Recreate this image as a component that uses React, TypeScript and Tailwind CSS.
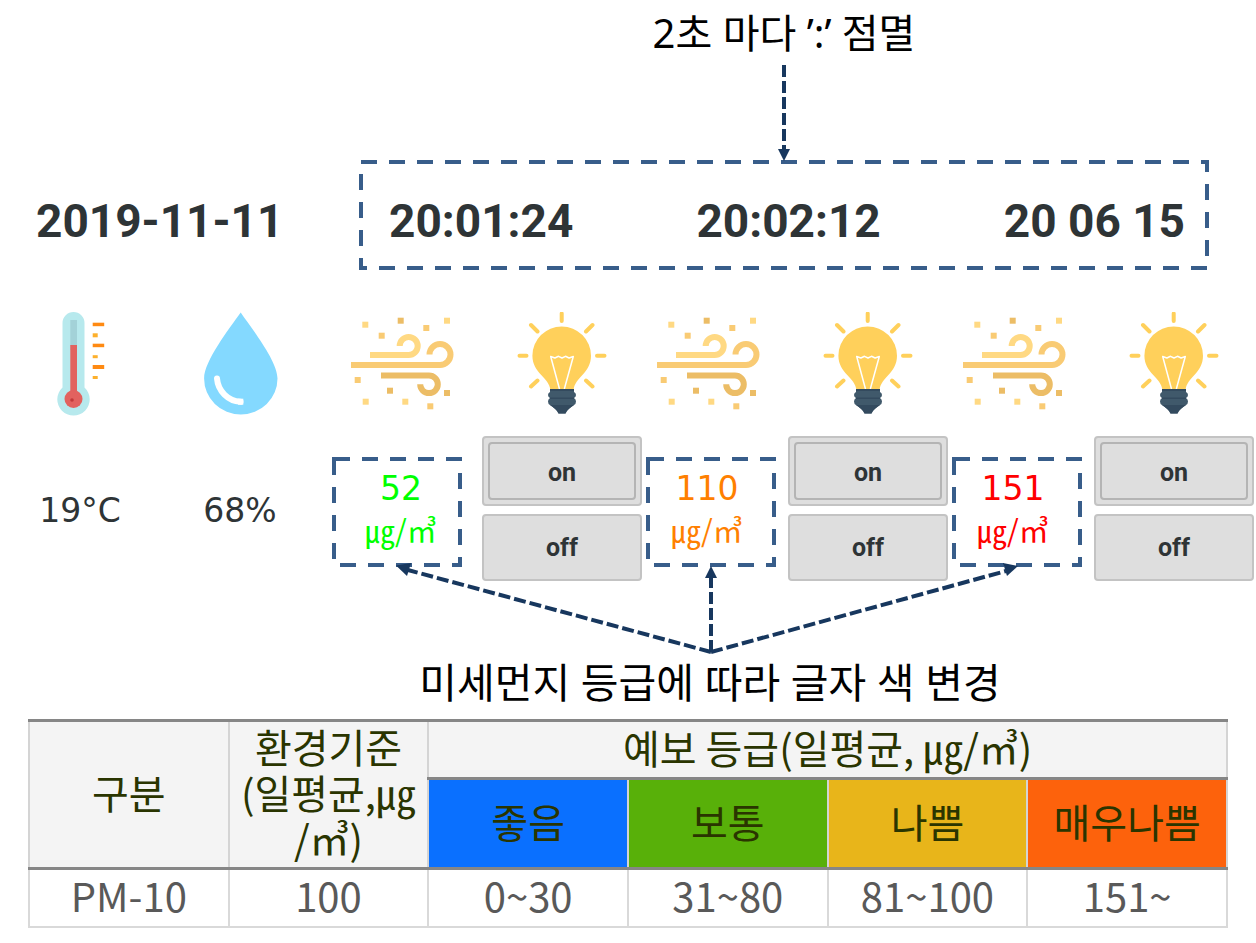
import React from "react";

const KR = "font-['Noto_Sans_CJK_KR','Noto_Sans',sans-serif]";
const NOTE = "font-['Noto_Sans','Noto_Sans_CJK_KR',sans-serif]";

function DashedFrame() {
  return (
    <svg className="absolute top-0.5 left-0.5 h-[calc(100%-4px)] w-[calc(100%-4px)] overflow-visible" aria-hidden="true">
      <rect width="100%" height="100%" fill="none" stroke="#385d8a" strokeWidth="4" strokeDasharray="16 12" />
    </svg>
  );
}

function Thermometer() {
  return (
    <svg width="50" height="104" viewBox="-2 0 50 104" aria-hidden="true">
      <path d="M5.5 11a11 11 0 0 1 22 0v64.500a16.200 16.200 0 1 1-22 0z" fill="#b7e9ed" />
      <rect x="13.300" y="8" width="6.700" height="30" fill="#a3d2d8" />
      <rect x="13.300" y="33" width="6.700" height="50" fill="#e2625f" />
      <circle cx="16.500" cy="87" r="9" fill="#e2625f" />
      <circle cx="15" cy="88" r="1.800" fill="#c23a3a" />
      <g fill="#ff8a12">
        <rect x="35.700" y="10.700" width="11.500" height="3.500" />
        <rect x="35.700" y="31.700" width="11.500" height="3.500" />
        <rect x="35.700" y="53" width="11.500" height="4" />
      </g>
      <g fill="#fdb02c">
        <rect x="35.700" y="21.300" width="5" height="4" />
        <rect x="35.700" y="43.200" width="5" height="3" />
        <rect x="35.700" y="64" width="5" height="3" />
      </g>
    </svg>
  );
}

function Drop() {
  return (
    <svg width="76" height="104" viewBox="-2 0 76 104" aria-hidden="true">
      <path d="M36.700 .5C48 17 73.500 49 73.500 66.500a36.700 36 0 0 1-73.400 0C.1 49 25 17 36.700 .5z" fill="#84d9ff" />
      <path d="M13 66.500C14 79 24 89 36.500 89.800" fill="none" stroke="#fff" strokeWidth="6" strokeLinecap="round" />
      <path d="M34 86.700h5.300v6H34z" fill="#fff" />
    </svg>
  );
}

const particles: [number, number, string][] = [
  [14.3, 7.7, "#ffd983"],
  [49.7, 3.7, "#ecbd66"],
  [96, 3.7, "#ffd983"],
  [75.3, 11, "#f9cb74"],
  [30.7, 18.7, "#f9cb74"],
  [6.7, 63, "#f9cb74"],
  [39, 73.7, "#ecbd66"],
  [14.7, 84.7, "#ffd983"],
  [54.3, 84.7, "#ffd983"],
  [79.3, 89.3, "#f9cb74"],
  [96, 76, "#ecbd66"],
];

function Wind() {
  return (
    <svg width="106" height="104" viewBox="-3 -5 106 104" aria-hidden="true">
      {particles.map(([x, y, fill]) => (
        <rect key={`${x}-${y}`} x={x - 3} y={y - 3} width="6" height="6" fill={fill} />
      ))}
      <g fill="none" strokeWidth="6">
        <path d="M19 38H57.700A9 9 0 1 0 48.700 29" stroke="#ffd983" />
        <path d="M0 48H89A10.500 10.500 0 1 0 78.500 37.500" stroke="#f9cb74" />
        <path d="M30 58.500H78A8.800 8.800 0 1 1 69.200 67.300" stroke="#ecbd66" />
      </g>
    </svg>
  );
}

function Bulb() {
  return (
    <svg width="90" height="104" viewBox="0 1 90 104" aria-hidden="true">
      <path d="M33.300 78.500C32.500 67 15.400 62 15.400 44.700a29.300 29.300 0 0 1 58.600 0C74 62 57.500 67 56.700 78.500z" fill="#ffd05b" />
      <path
        d="M44.700 2.500v7.500M2.500 44.700H9.500M80 44.700h7.500M14 14l6.500 6.500M75.500 14 69 20.500M20.500 69.500l-6.500 6M69 69.500l6.500 6"
        stroke="#ffd05b"
        strokeWidth="4"
        strokeLinecap="round"
      />
      <path
        d="M42.500 78 33.700 45.500l4.200 1.500 3.600-1.700 3.500 1.700 3.500-1.700 3.600 1.700 4.200-1.500L47.300 78"
        fill="none"
        stroke="#fff"
        strokeWidth="1.500"
        strokeLinejoin="round"
      />
      <path d="M33 78h24v3q2 1 2 3t-2 3q2 1 2 3.500t-2 3.500c-4 3-7 5-8.500 8.500h-7c-1.500-3.500-4.500-5.500-8.500-8.500q-2-1-2-3.500t2-3.500q-2-1-2-3t2-3z" fill="#40596b" />
      <path d="M33 78h24v2H33zM33 86.500h24v1.600H33zM33 94h24c-4 3-7 5-8.500 8.500h-7C40 99 37 97 33 94z" fill="#334a5e" />
    </svg>
  );
}

interface Station {
  value: string;
  tone: string;
  frame: string;
}

const stations: Station[] = [
  { value: "52", tone: "text-[#00ff00]", frame: "-left-1" },
  { value: "110", tone: "text-[#ff8000]", frame: "left-1" },
  { value: "151", tone: "text-[#ff0000]", frame: "left-1" },
];

const buttonBase =
  "rounded-sm border-2 border-[#c3c3c3] bg-[#dedede] font-['Roboto',sans-serif] text-[25px] leading-8 font-bold text-[#2e3436]";

function StationPanel({ value, tone, frame }: Station) {
  return (
    <section className="grid grid-cols-[130fr_16fr_160fr]">
      <div className="flex h-[104px] justify-center">
        <Wind />
      </div>
      <div className="col-start-3 flex justify-center">
        <Bulb />
      </div>
      <div className="relative mt-[41px] h-[110px] text-center">
        <div className={`absolute top-0 h-full w-full ${frame}`}>
          <DashedFrame />
        </div>
        <p className={`pt-3 ${tone}`}>
          <span className="block font-['DejaVu_Sans',sans-serif] text-[33px] leading-[40px]">{value}</span>
          <span className="block font-['Noto_Sans_CJK_KR',sans-serif] text-[30px] leading-[40px]">㎍/㎥</span>
        </p>
      </div>
      <div className="col-start-3 mt-5 flex flex-col gap-2">
        <button type="button" className={`flex h-[70px] p-1 ${buttonBase}`}>
          <span className="flex h-full w-full items-center justify-center rounded-sm border-2 border-[#b4b4b4] pt-1">on</span>
        </button>
        <button type="button" className={`h-[67px] ${buttonBase}`}>
          off
        </button>
      </div>
    </section>
  );
}

function Reading({ icon, text }: { icon: React.ReactNode; text: string }) {
  return (
    <div className="flex flex-col items-center">
      {icon}
      <p className="mt-[74px] font-['DejaVu_Sans',sans-serif] text-[33px] leading-[42px] text-[#2e3436]">{text}</p>
    </div>
  );
}

const grades = [
  { name: "좋음", range: "0~30", bg: "bg-[#0a70ff]" },
  { name: "보통", range: "31~80", bg: "bg-[#58b009]" },
  { name: "나쁨", range: "81~100", bg: "bg-[#e8b51a]" },
  { name: "매우나쁨", range: "151~", bg: "bg-[#fd620c]" },
];

const head = "border-x-2 border-y-[3px] border-x-[#d4d4d4] border-y-[#868686] px-1 pt-0 pb-1.5 font-normal text-[#2a3500]";
const cell = "border-2 border-[#d9d9d9] px-0 pt-0 pb-1.5";

export default function App() {
  return (
    <main className="min-h-screen w-full bg-white pb-4">
      <header className="grid grid-cols-[359fr_850fr_47fr]">
        <div className="col-start-2 flex flex-col items-center">
          <p className={`h-[65px] pt-2 text-[40px] leading-[50px] text-black ${NOTE}`}>2초 마다 ’:’ 점멸</p>
          <svg width="12" height="96" viewBox="0 0 12 96" className="relative z-10" aria-hidden="true">
            <path d="M6 0V88" stroke="#17375e" strokeWidth="4" strokeDasharray="12 4" />
            <path d="M0 84h12L6 96z" fill="#17375e" />
          </svg>
        </div>
        <p className="-mt-px col-start-1 flex items-center pt-3 pl-9 font-['Roboto',sans-serif] text-[46px] leading-[48px] font-bold whitespace-nowrap text-[#2e3436]">
          2019-11-11
        </p>
        <div className="relative -mt-px flex h-[110px] items-center justify-between pt-3 pr-6 pl-[30px] font-['Roboto',sans-serif] text-[46px] leading-[48px] font-bold text-[#2e3436]">
          <DashedFrame />
          <time>20:01:24</time>
          <time>20:02:12</time>
          <time>20 06 15</time>
        </div>
      </header>

      <div className="mt-[42px] grid grid-cols-[336fr_306fr_306fr_306fr] pr-0.5">
        <section className="grid grid-cols-[160fr_160fr_16fr]">
          <Reading icon={<Thermometer />} text="19°C" />
          <Reading icon={<Drop />} text="68%" />
        </section>
        {stations.map((station) => (
          <StationPanel key={station.value} {...station} />
        ))}
      </div>

      <svg viewBox="0 0 1256 94" className="pointer-events-none relative -mt-[18px] block w-full" aria-hidden="true">
        <g stroke="#17375e" strokeWidth="4" strokeDasharray="12 4" fill="none">
          <path d="M711 89 408 7" />
          <path d="M711 89V12" />
          <path d="M711 89 1006 8" />
        </g>
        <g fill="#17375e">
          <path d="M396 2.500 411 0 407 13z" />
          <path d="M705 15h12L711 3z" />
          <path d="M1018 3 1003 0 1007 13z" />
        </g>
      </svg>

      <p className={`pl-[164px] text-center text-[41px] leading-[50px] text-black ${NOTE}`}>
        미세먼지 등급에 따라 글자 색 변경
      </p>

      <div className="px-7">
        <table className={`mt-3 w-full table-fixed border-collapse text-center text-[40px] leading-[46px] text-[#595959] ${KR}`}>
          <thead>
            <tr className="h-[58px]">
              <th rowSpan={2} scope="col" className={`${head} bg-[#f4f4f4]`}>
                구분
              </th>
              <th rowSpan={2} scope="col" className={`${head} bg-[#f4f4f4]`}>
                환경기준 (일평균,㎍ /㎥)
              </th>
              <th colSpan={4} scope="colgroup" className={`${head} bg-[#f4f4f4]`}>
                예보 등급(일평균, ㎍/㎥)
              </th>
            </tr>
            <tr className="h-[90px]">
              {grades.map((g) => (
                <th key={g.name} scope="col" className={`${head} ${g.bg}`}>
                  {g.name}
                </th>
              ))}
            </tr>
          </thead>
          <tbody>
            <tr className="h-[58px]">
              <td className={cell}>PM-10</td>
              <td className={cell}>100</td>
              {grades.map((g) => (
                <td key={g.name} className={cell}>
                  {g.range}
                </td>
              ))}
            </tr>
          </tbody>
        </table>
      </div>
    </main>
  );
}
